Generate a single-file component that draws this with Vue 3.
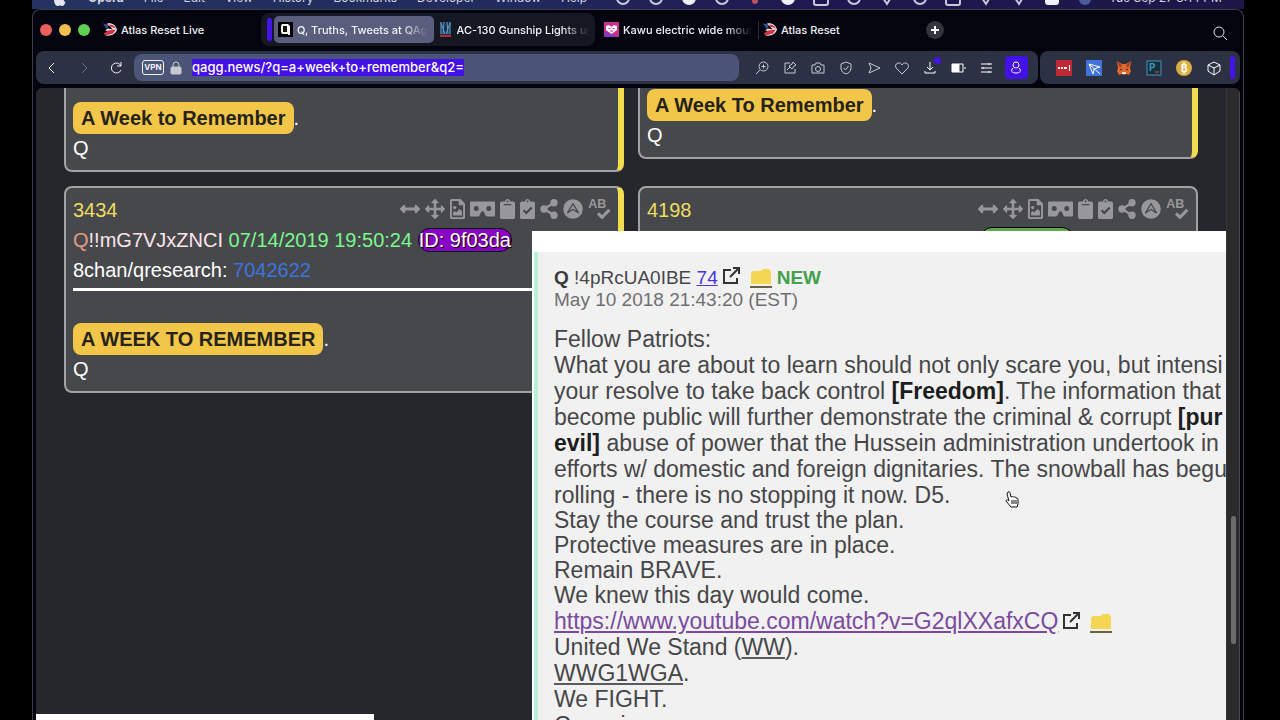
<template>
  <div class="desktop">

    <!-- MENU BAR -->
    <header class="menu-bar">
      <svg class="apple" viewBox="0 0 12 14"><path d="M6 4C7 3 10 3 11 5C9 6 9 9 11.500 10C11 12 9.500 14 8.500 14C7.500 14 7 13.500 6 13.500S4.500 14 3.500 14C2 14 0 11 0 8C0 4 3.500 2.500 6 4Z" /></svg>
      <nav class="menus">
        <span v-for="(m, i) in menus" :key="m" :class="{ strong: i === 0 }">{{ m }}</span>
      </nav>
      <div class="tray">
        <svg v-for="(t, i) in tray" :key="i" viewBox="0 0 16 16">
          <path v-if="t === 'check'" d="M4 7l4 6 3-5" class="line" />
          <rect v-else-if="t === 'box'" x="1" y="4" width="14" height="10" rx="2" class="line" />
          <rect v-else-if="t === 'toggle'" x="1" y="5" width="14" height="9" rx="3" class="fill" />
          <circle v-else-if="t === 'disc'" cx="8" cy="7" r="7" class="fill" />
          <circle v-else-if="t === 'siri'" cx="8" cy="8" r="6" class="siri" />
          <circle v-else-if="t === 'red'" cx="8" cy="10" r="3" class="red" />
          <circle v-else cx="8" cy="7" r="6" class="line" />
        </svg>
      </div>
      <span class="clock">Tue Sep 27 3:14 PM</span>
    </header>

    <div class="window">

      <!-- TABS -->
      <div class="tab-strip">
        <div class="lights"><i class="red"></i><i class="yellow"></i><i class="green"></i></div>

        <button class="tab first">
          <svg class="fav flag" viewBox="0 0 14 14"><path d="M0 1l6 1-2 5z" fill="#35508f" /><path d="M4 1c5-1 9 2 10 6-1 4-6 7-11 6l-2-2 8-2-7-1 3-2 5 1z" fill="#f3e9ea" /><path d="M6 2c4 0 6 2 7 4L7 4zM5 8l8-1-3 4-7 2-2-2z" fill="#cf3240" /></svg>
          <span>Atlas Reset Live</span>
        </button>

        <div class="island">
          <i class="island-bar"></i>
          <button class="tab active">
            <svg class="fav" viewBox="0 0 15 15"><rect width="15" height="15" fill="#000" /><path d="M4 2h6l2 2v9h-2v-1H4L3 10V4z" fill="#f5f5f5" /><path d="M5 4h4v6H5z" fill="#111" /></svg>
            <span>Q, Truths, Tweets at QAgg</span>
          </button>
          <button class="tab dim">
            <svg class="fav narrow" viewBox="0 0 11 15"><rect width="11" height="15" fill="#1c2c43" /><path d="M1 0v12M4 0l-1 12M7 0l1 12M10 0v12M1 1l4 11M10 1L6 12" stroke="#5f9fd0" fill="none" /><path d="M0 14h11" stroke="#b02a38" stroke-width="2" /></svg>
            <span>AC-130 Gunship Lights up</span>
          </button>
        </div>

        <button class="tab kawu">
          <svg class="fav" viewBox="0 0 15 15"><rect width="15" height="15" fill="#c9318d" /><path d="M0 9l15 6H0z" fill="#8a37b5" /><path d="M7.500 12L2 8V4l3-1 2.500 2L10 3l3 1v4z" fill="#fff" /><path d="M4.500 6.500h2M8.500 6.500h2M6 9h3" stroke="#c9318d" /></svg>
          <span>Kawu electric wide mouth</span>
        </button>
        <button class="tab last">
          <svg class="fav flag" viewBox="0 0 14 14"><path d="M0 1l6 1-2 5z" fill="#35508f" /><path d="M4 1c5-1 9 2 10 6-1 4-6 7-11 6l-2-2 8-2-7-1 3-2 5 1z" fill="#f3e9ea" /><path d="M6 2c4 0 6 2 7 4L7 4zM5 8l8-1-3 4-7 2-2-2z" fill="#cf3240" /></svg>
          <span>Atlas Reset</span>
        </button>
        <button class="new-tab" aria-label="New tab"><svg viewBox="0 0 18 18"><path d="M9 5v8M5 9h8" /></svg></button>
        <button class="find" aria-label="Search tabs"><svg viewBox="0 0 16 16"><circle cx="7" cy="7" r="5" /><path d="M11 11l4 4" /></svg></button>
      </div>

      <!-- TOOLBAR -->
      <div class="toolbar">
        <div class="bar main-bar">
          <div class="nav-buttons">
            <button aria-label="Back"><svg viewBox="0 0 18 18"><path d="M11 4L6 9l5 5" /></svg></button>
            <button aria-label="Forward" class="off"><svg viewBox="0 0 18 18"><path d="M7 4l5 5-5 5" /></svg></button>
            <button aria-label="Reload"><svg viewBox="0 0 18 18"><path d="M14 7a5 5 0 1 0 0 4M14 3v4h-4" /></svg></button>
          </div>
          <div class="address">
            <span class="vpn">VPN</span>
            <svg class="lock" viewBox="0 0 12 14"><rect x="1" y="6" width="10" height="7" rx="1" /><path d="M3 6V4a3 3 0 0 1 6 0v2" /></svg>
            <input ref="addressInput" v-model="address" type="text" aria-label="Address" spellcheck="false" />
          </div>
          <div class="tools">
            <button aria-label="Zoom"><svg viewBox="0 0 18 18"><circle cx="10.500" cy="7.500" r="4.500" /><path d="M7 11l-4 4M8.500 7.500h4M10.500 5.500v4" /></svg></button>
            <button aria-label="Pin"><svg viewBox="0 0 18 18"><path d="M9 4H4v10h10v-4M12 3l3 3-2 1-2 3-3-3 3-2zM9 8l-3 3" /></svg></button>
            <button aria-label="Snapshot"><svg viewBox="0 0 18 18"><path d="M3 6h3l1-2h4l1 2h3v8H3z" /><circle cx="9" cy="10" r="2.500" /></svg></button>
            <button aria-label="Ad blocker"><svg viewBox="0 0 18 18"><path d="M9 3l5 2v4c0 3-2 5-5 6-3-1-5-3-5-6V5z" /><path d="M6.500 9l2 2 3-4" /></svg></button>
            <button aria-label="My Flow"><svg viewBox="0 0 18 18"><path d="M4 4l11 5-11 5 2-5z" /></svg></button>
            <button aria-label="Favourite"><svg viewBox="0 0 18 18"><path d="M9 15L4 10C1 7 3 4 6 4c1 0 2 0 3 2 1-2 2-2 3-2 3 0 5 3 2 6z" /></svg></button>
            <button aria-label="Downloads" class="lit"><svg viewBox="0 0 18 18"><path d="M9 3v8M6 8l3 3 3-3M4 12v2h10v-2" /></svg><i class="dot"></i></button>
            <button aria-label="Battery saver" class="lit"><svg viewBox="0 0 18 18"><path d="M3 5h7v8H3z" fill="currentColor" /><path d="M10 5h4v8h-4M16 8v2" /></svg></button>
            <button aria-label="Easy setup" class="lit"><svg viewBox="0 0 18 18"><path d="M4 5h11M4 9h11M4 13h11M12 4v2M6 8v2M12 12v2" /></svg></button>
            <button aria-label="Profile" class="profile"><svg viewBox="0 0 18 18"><circle cx="9" cy="6" r="3" /><path d="M6 9c-3 3-1 5 3 5s6-2 3-5" /></svg></button>
          </div>
        </div>

        <div class="bar extensions">
          <button aria-label="Password manager"><svg viewBox="0 0 16 16"><rect width="16" height="16" rx="1" fill="#bf2a35" /><path d="M2 8h2M5 8h2M8 8h3" stroke="#fff" stroke-width="2" /><path d="M13.500 5v6" stroke="#fff" /></svg></button>
          <button aria-label="Send"><svg viewBox="0 0 16 16"><rect width="16" height="16" fill="#3f74dc" /><path d="M3 4l11 3-6 2-1 5zM3 4l11 10" fill="none" stroke="#fff" /></svg></button>
          <button aria-label="Wallet"><svg viewBox="0 0 16 16"><path d="M1 1l5 3h4l5-3-1 7 1 3-2 4-3-1-2 1-2-1-3 1-2-4 1-3z" fill="#dd6a2c" /><path d="M1 1l5 4-2 3zM15 1l-5 4 2 3z" fill="#a63e22" /><path d="M4 9l2 1M12 9l-2 1" stroke="#3c1d12" /><path d="M6 13h4" stroke="#f5dcc7" stroke-width="2" /></svg></button>
          <button aria-label="PocketTube"><svg viewBox="0 0 16 16"><rect x="1" y="1" width="14" height="14" fill="#14303f" stroke="#33637c" stroke-width="2" /><text x="3" y="11" font-size="10" font-weight="700" fill="#3f95b8">P</text><path d="M9 12h4" stroke="#d8532f" /></svg></button>
          <button aria-label="Bitcoin"><svg viewBox="0 0 16 16"><circle cx="8" cy="8" r="8" fill="#dcae41" /><path d="M7 2v2M9 2v2M7 12v2M9 12v2" stroke="#fff" /><text x="5" y="12" font-size="10" font-weight="700" fill="#fff">B</text></svg></button>
          <button aria-label="Extensions"><svg viewBox="0 0 16 16"><path d="M8 2l6 3v6l-6 4-6-4V5zM2 5l6 3 6-3M8 8v7" fill="none" stroke="#fff" /></svg></button>
          <i class="side-bar"></i>
        </div>
      </div>

      <!-- PAGE -->
      <div class="page">
        <main class="posts">
          <article class="post tail">
            <p><mark>A Week to Remember</mark>.</p>
            <p>Q</p>
          </article>
          <article class="post tail short">
            <p><mark>A Week To Remember</mark>.</p>
            <p>Q</p>
          </article>

          <article v-for="post in posts" :key="post.number" class="post" :class="{ plain: post.plain }">
            <div class="post-head">
              <a href="#" class="number">{{ post.number }}</a>
              <div class="actions">
                <svg class="w20" viewBox="0 0 512 512"><path d="M378 170v46H134v-46c0-21-26-32-41-17L7 239c-9 9-9 25 0 34l86 86c15 15 41 4 41-17v-46h244v46c0 21 26 32 41 17l86-86c9-9 9-25 0-34l-86-86c-15-15-41-4-41 17z" /></svg>
                <svg class="w20" viewBox="0 0 512 512"><path d="M242 6c8-8 20-8 28 0l76 74c10 10 4 28-12 28h-46v116h116v-46c0-16 18-22 28-12l74 76c8 8 8 20 0 28l-74 76c-10 10-28 4-28-12v-46H288v116h46c16 0 22 18 12 28l-76 74c-8 8-20 8-28 0l-76-74c-10-10-4-28 12-28h46V288H108v46c0 16-18 22-28 12L6 270c-8-8-8-20 0-28l74-76c10-10 28-4 28 12v46h116V108h-46c-16 0-22-18-12-28z" /></svg>
                <svg class="w15" viewBox="0 0 384 512"><path fill-rule="evenodd" d="M48 0h220l116 116v348q0 48-48 48H48q-48 0-48-48V48Q0 0 48 0zm0 48v416h288V160H224V48zM80 424v-80l40-40 40 40 88-88 56 56v112z" /><circle cx="120" cy="220" r="42" /></svg>
                <svg class="w25" viewBox="0 0 640 512"><path fill-rule="evenodd" d="M608 64H32C14 64 0 78 0 96v320c0 18 14 32 32 32h161c25 0 48-15 58-38l33-75c14-31 58-31 72 0l33 75c10 23 33 38 58 38h161c18 0 32-14 32-32V96c0-18-14-32-32-32zM160 304a64 64 0 1 1 0-128 64 64 0 0 1 0 128zm320 0a64 64 0 1 1 0-128 64 64 0 0 1 0 128z" /></svg>
                <svg class="w15" viewBox="0 0 384 512"><path :d="clipboard" /><path d="M96 144h192" class="cut thin" /></svg>
                <svg class="w15" viewBox="0 0 384 512"><path :d="clipboard" /><path d="M90 290l70 70 140-140" class="cut" /></svg>
                <svg class="w18" viewBox="0 0 448 512"><path d="M352 96L96 256l256 160" class="link-line" /><circle cx="352" cy="96" r="94" /><circle cx="96" cy="256" r="94" /><circle cx="352" cy="416" r="94" /></svg>
                <svg class="w20" viewBox="0 0 512 512"><circle cx="256" cy="256" r="250" /><path d="M110 360l146-240 146 240-146-90z" class="cut thin" /></svg>
                <svg class="w23" viewBox="0 0 576 512"><text x="0" y="242" font-size="320" font-weight="700">AB</text><path d="M250 370l100 100 190-190" class="tick" /></svg>
              </div>
            </div>

            <template v-if="!post.plain">
              <p><span class="who">Q</span><span class="trip">{{ post.trip }}</span> <span class="date">{{ post.date }}</span> <span class="badge">{{ post.id }}</span></p>
              <p>{{ post.board }}: <a href="#" class="ref">{{ post.ref }}</a></p>
              <hr />
              <p class="body-text"><mark>{{ post.text }}</mark>.</p>
              <p>Q</p>
            </template>
            <p v-else class="badge-row"><span class="badge green"></span></p>
          </article>

          <!-- enlarged capture over the posts -->
          <aside class="preview">
            <div class="drop">
              <div class="drop-head">
                <b>Q</b> !4pRcUA0IBE <a href="#">74</a><svg class="ext" viewBox="0 0 18 18"><path :d="external" /></svg>
                <svg class="folder" viewBox="0 0 22 20"><path :d="folder" /><path d="M0 19h22" class="under" /></svg>
                <strong>NEW</strong>
              </div>
              <div class="drop-head grey">May 10 2018 21:43:20 (EST)</div>

              <p class="prose">
                Fellow Patriots:<br />
                What you are about to learn should not only scare you, but intensi<br />
                your resolve to take back control <b>[Freedom]</b>. The information that<br />
                become public will further demonstrate the criminal &amp; corrupt <b>[pur</b><br />
                <b>evil]</b> abuse of power that the Hussein administration undertook in<br />
                efforts w/ domestic and foreign dignitaries. The snowball has begu<br />
                rolling - there is no stopping it now. D5.
              </p>
              <p class="tight">
                Stay the course and trust the plan.<br />
                Protective measures are in place.<br />
                Remain BRAVE.<br />
                We knew this day would come.
              </p>
              <p>
                <a href="#" class="visited">https://www.youtube.com/watch?v=G2qlXXafxCQ</a><svg class="ext" viewBox="0 0 18 18"><path :d="external" /></svg>
                <svg class="folder" viewBox="0 0 22 20"><path :d="folder" /><path d="M0 19h22" class="under" /></svg><br />
                United We Stand (<abbr>WW</abbr>).<br />
                <abbr>WWG1WGA</abbr>.<br />
                We FIGHT.<br />
                Conspiracy no more.
              </p>
            </div>
            <svg class="pointer" viewBox="0 0 14 17"><path d="M3 1c1-1 2 0 2 1l1 4c2-1 3 0 3 0 1 0 2 0 2 1 2 0 2 1 2 2v4l-1 3H6L1 10c0-1 1-2 3 0L2 3z" /><path d="M7 9v4M9 9v4M11 9v4" /></svg>
          </aside>
        </main>

        <div class="scrollbar"><div class="thumb"></div></div>
        <div class="status-strip"></div>
      </div>
    </div>
  </div>
</template>

<script setup>
import { ref, onMounted } from 'vue'

const menus = ['Opera', 'File', 'Edit', 'View', 'History', 'Bookmarks', 'Developer', 'Window', 'Help']
const tray = ['ring', 'ring', 'disc', 'ring', 'red', 'disc', 'box', 'ring', 'check', 'ring', 'box', 'check', 'check', 'toggle', 'siri']

const address = ref('qagg.news/?q=a+week+to+remember&q2=')
const addressInput = ref(null)

const posts = [
  {
    number: '3434',
    trip: '!!mG7VJxZNCI',
    date: '07/14/2019 19:50:24',
    id: 'ID: 9f03da',
    board: '8chan/qresearch',
    ref: '7042622',
    text: 'A WEEK TO REMEMBER'
  },
  { number: '4198', plain: true }
]

const clipboard = 'M384 112v352c0 27-21 48-48 48H48c-27 0-48-21-48-48V112c0-27 21-48 48-48h80c0-35 29-64 64-64s64 29 64 64h80c27 0 48 21 48 48zM192 40c-13 0-24 11-24 24s11 24 24 24 24-11 24-24-11-24-24-24'
const external = 'M9 3H2v13h13V11M11 1h6v6M17 1L8 10'
const folder = 'M1 5l2-2h8l2-2h6l2 3v12H1z'

onMounted(() => {
  addressInput.value.focus()
  addressInput.value.select()
})
</script>

<style>
body {
  background: #000;
}
</style>

<style scoped>
* {
  box-sizing: border-box;
}

.desktop {
  height: 100vh;
  padding: 0 36px 0 32px;
  display: flex;
  flex-direction: column;
  overflow: hidden;
  background: #000;
  font-family: Inter, "Liberation Sans", sans-serif;
}

button {
  border: 0;
  padding: 0;
  background: none;
  color: inherit;
  font: inherit;
}

p {
  margin: 0;
}

svg {
  display: block;
  flex: none;
}

/* MENU BAR */
.menu-bar {
  height: 9px;
  flex: none;
  overflow: hidden;
  display: flex;
  align-items: flex-end;
  padding-left: 22px;
  background: linear-gradient(to right, #24335f, #222a5c 40%, #1e1850 65%, #1d1647);
  color: #d3d6e4;
  font-size: 12px;
  line-height: 22px;
  white-space: nowrap;
}

.apple {
  width: 12px;
  height: 14px;
  margin: 0 22px 3px 0;
  fill: #e4e6ef;
}

.menus {
  display: flex;
  gap: 20px;
}

.strong {
  font-weight: 700;
}

.tray {
  display: flex;
  gap: 17px;
  margin-left: 28px;
}

.tray svg {
  width: 16px;
  height: 16px;
  margin-bottom: 2px;
}

.tray .line {
  fill: none;
  stroke: #c9c8da;
  stroke-width: 2;
}

.tray .fill {
  fill: #f0f0f5;
}

.tray .red {
  fill: #b8505f;
}

.tray .siri {
  fill: #4b5b9c;
}

.clock {
  margin-left: 16px;
}

/* WINDOW */
.window {
  flex: 1;
  min-height: 0;
  display: flex;
  flex-direction: column;
  padding: 0 3px;
  border: 1px solid #3c3c4c;
  border-bottom: 0;
  border-radius: 8px 8px 0 0;
  background: #03040e;
}

.tab-strip {
  height: 41px;
  flex: none;
  display: flex;
  align-items: center;
  padding: 0 12px 2px 4px;
  color: #f1f1f5;
  font-size: 11px;
  font-weight: 500;
}

.lights {
  display: flex;
  gap: 7px;
}

.lights i {
  width: 12px;
  height: 12px;
  border-radius: 50%;
}

.lights .red {
  background: #ec5f5f;
}

.lights .yellow {
  background: #f0bf4d;
}

.lights .green {
  background: #5fd052;
}

.tab {
  display: flex;
  align-items: center;
  gap: 4px;
  height: 27px;
  padding: 0 6px 0 4px;
  border-radius: 5px;
  overflow: hidden;
  text-align: left;
}

.tab span {
  flex: 1;
  overflow: hidden;
  white-space: nowrap;
}

.tab .fav {
  width: 15px;
  height: 15px;
}

.tab .flag {
  width: 14px;
}

.tab .narrow {
  width: 11px;
  margin-right: 2px;
}

.first {
  width: 162px;
  margin-left: 9px;
}

.island {
  display: flex;
  align-items: center;
  gap: 2px;
  width: 334px;
  height: 33px;
  padding-left: 6px;
  border-radius: 8px;
  background: #151722;
}

.island-bar,
.side-bar {
  width: 5px;
  height: 23px;
  border-radius: 2px;
  background: #4314e8;
}

.island .tab {
  width: 160px;
}

.active {
  background: #5a5e7d;
}

.active span,
.dim span,
.kawu span {
  mask-image: linear-gradient(to right, #000 80%, transparent);
}

.kawu {
  width: 158px;
  margin-left: 5px;
}

.last {
  width: 158px;
  height: 18px;
  border-left: 1px solid #2b2c37;
  border-radius: 0;
}

.new-tab {
  width: 18px;
  height: 18px;
  margin-left: 10px;
  border-radius: 50%;
  background: #33343d;
}

.new-tab svg {
  stroke: #fff;
  stroke-width: 2;
}

.find {
  margin: 6px 0 0 auto;
}

.find svg {
  width: 16px;
  height: 16px;
  fill: none;
  stroke: #e6e6ec;
}

/* TOOLBAR */
.toolbar {
  display: flex;
  flex: none;
  gap: 2px;
  margin-bottom: 4px;
  color: #c5c8d6;
}

.bar {
  display: flex;
  align-items: center;
  height: 33px;
  border-radius: 8px;
  background: #2d3144;
}

.main-bar {
  flex: 1;
}

.bar svg {
  fill: none;
  stroke: currentColor;
}

.nav-buttons {
  display: flex;
  gap: 14px;
  width: 98px;
  padding-left: 7px;
  color: #f0f1f6;
}

.nav-buttons svg,
.tools svg {
  width: 18px;
  height: 18px;
}

.nav-buttons .off {
  color: #696d80;
}

.address {
  flex: 1;
  display: flex;
  align-items: center;
  height: 27px;
  padding-left: 8px;
  border-radius: 8px;
  background: #4b5577;
}

.vpn {
  width: 22px;
  height: 15px;
  border: 1px solid #f1f2f7;
  border-radius: 3px;
  color: #f1f2f7;
  font-size: 8px;
  font-weight: 700;
  line-height: 13px;
  text-align: center;
}

.bar .lock {
  width: 12px;
  height: 14px;
  margin: 0 10px 0 6px;
  fill: #c9cad0;
  color: #c9cad0;
}

.lock path {
  fill: none;
}

.address input {
  flex: 1;
  min-width: 0;
  padding: 0;
  border: 0;
  outline: 0;
  background: none;
  color: #fff;
  font: 500 13px/17px Inter, "Liberation Sans", sans-serif;
}

.address input::selection {
  background: #4310e6;
  color: #fff;
}

.tools {
  display: flex;
  align-items: center;
  gap: 10px;
  padding: 0 10px 0 14px;
}

.tools .lit {
  position: relative;
  color: #fff;
}

.dot {
  position: absolute;
  top: -2px;
  right: -2px;
  width: 7px;
  height: 7px;
  border-radius: 50%;
  background: #4314e8;
}

.profile {
  width: 23px;
  height: 23px;
  padding: 0 2px;
  border-radius: 4px;
  background: #4310e6;
  color: #fff;
}

.extensions {
  width: 200px;
  gap: 14px;
  padding-left: 16px;
}

.extensions svg {
  width: 16px;
  height: 16px;
  stroke: none;
}

.side-bar {
  margin-left: -6px;
}

/* PAGE */
.page {
  position: relative;
  flex: 1;
  min-height: 0;
  display: flex;
  overflow: hidden;
  border-radius: 6px 6px 0 0;
  background: #26272c;
}

.posts {
  position: relative;
  flex: 1;
  display: grid;
  grid-template-columns: 1fr 1fr;
  grid-auto-rows: max-content;
  align-items: start;
  gap: 14px;
  padding: 0 28px;
  color: #fff;
  font-family: "Liberation Sans", Arial, sans-serif;
  font-size: 20px;
  line-height: 30px;
}

.post {
  min-width: 0;
  padding: 7px;
  border: 2px solid #a2a2a4;
  border-right: 6px solid #f2dc50;
  border-radius: 8px;
  background: #47484b;
}

.post.tail {
  padding-top: 15px;
  border-top: 0;
  border-radius: 0 0 8px 8px;
}

.post.short {
  padding-top: 2px;
}

.post.plain {
  border-right: 2px solid #a2a2a4;
}

mark {
  padding: 5px 8px;
  border-radius: 8px;
  background: #f2c649;
  color: #25231a;
  font-weight: 700;
}

.post-head {
  display: flex;
  justify-content: space-between;
}

.number {
  color: #eedd63;
  text-decoration: none;
}

.actions {
  display: flex;
  gap: 5px;
  padding-top: 4px;
  fill: #98989a;
}

.actions svg {
  height: 20px;
}

.w15 {
  width: 15px;
}

.w18 {
  width: 18px;
}

.w20 {
  width: 20px;
}

.w23 {
  width: 23px;
}

.w25 {
  width: 25px;
}

.cut {
  fill: none;
  stroke: #47484b;
  stroke-width: 56;
}

.cut.thin {
  stroke-width: 32;
}

.link-line,
.tick {
  fill: none;
  stroke: #98989a;
  stroke-width: 60;
}

.tick {
  stroke-width: 80;
}

.who {
  color: #e59b80;
}

.trip {
  color: #fbe5ea;
}

.date {
  color: #7bf78f;
}

.ref {
  color: #3d74dd;
  text-decoration: none;
}

.badge {
  border: 1px solid #000;
  border-radius: 12px;
  background: #8904c6;
  text-shadow: 1px 1px 1px #000;
}

.badge.green {
  display: block;
  width: 94px;
  height: 24px;
  background: #63a84f;
}

.badge-row {
  padding: 2px 0 4px 333px;
}

hr {
  height: 3px;
  margin: 3px 0 0;
  border: 0;
  background: #fff;
}

.body-text {
  margin-top: 33px;
}

/* PREVIEW */
.preview {
  position: absolute;
  top: 143px;
  right: 0;
  bottom: 0;
  left: 496px;
  overflow: hidden;
  padding: 21px 0 0 2px;
  background: #fff;
}

.drop {
  height: 100%;
  padding: 15px 0 0 16px;
  border-left: 4px solid #b9f0d8;
  background: #f1f1f1;
  color: #464648;
  font-size: 23px;
  line-height: 26px;
  white-space: nowrap;
}

.drop b {
  color: #1d1d1f;
}

.drop-head {
  font-size: 19px;
  line-height: 22px;
}

.drop-head b {
  color: #3a3a3c;
}

.drop-head a {
  color: #4a35d8;
}

.drop-head strong {
  margin-left: 5px;
  color: #43a04b;
}

.drop-head.grey {
  margin-bottom: 15px;
  color: #6f6f71;
}

.drop .tight {
  line-height: 25px;
}

.visited {
  color: #7b4a9e;
}

.ext,
.folder {
  display: inline-block;
  width: 18px;
  height: 18px;
  margin-left: 4px;
  vertical-align: -1px;
}

.ext path {
  fill: none;
  stroke: #333335;
  stroke-width: 2;
}

.folder {
  width: 22px;
  height: 20px;
  margin-left: 10px;
  vertical-align: -4px;
  fill: #f5d653;
}

.under {
  stroke: #6b6340;
  stroke-width: 2;
}

abbr {
  text-decoration: underline #5b5b5d;
}

.pointer {
  position: absolute;
  top: 260px;
  left: 473px;
  width: 14px;
  height: 17px;
  fill: #fff;
  stroke: #111;
}

/* SCROLLBAR */
.scrollbar {
  width: 14px;
  padding: 428px 3px 0 4px;
  border-left: 1px solid #35353a;
  border-right: 1px solid #4a4a4c;
  background: #2b2b2b;
}

.thumb {
  height: 128px;
  border-radius: 4px;
  background: #6c6c6c;
}

.status-strip {
  position: absolute;
  bottom: 0;
  left: 0;
  width: 338px;
  height: 6px;
  background: #fff;
}
</style>
